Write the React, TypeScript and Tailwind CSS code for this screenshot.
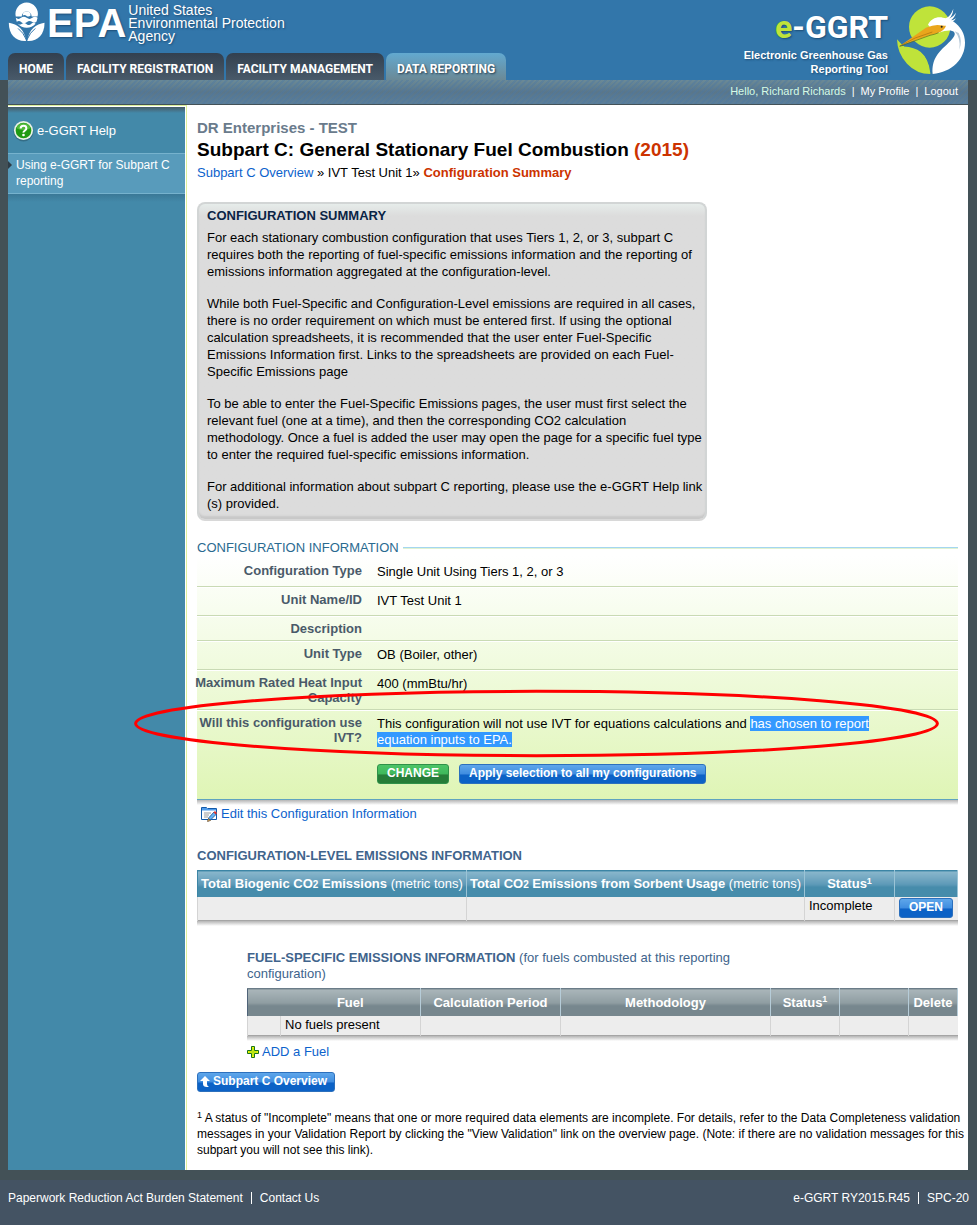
import type { ReactNode } from "react";

const TABS = [
  { label: "HOME", active: false },
  { label: "FACILITY REGISTRATION", active: false },
  { label: "FACILITY MANAGEMENT", active: false },
  { label: "DATA REPORTING", active: true },
];

const SUMMARY = [
  "For each stationary combustion configuration that uses Tiers 1, 2, or 3, subpart C requires both the reporting of fuel-specific emissions information and the reporting of emissions information aggregated at the configuration-level.",
  "While both Fuel-Specific and Configuration-Level emissions are required in all cases, there is no order requirement on which must be entered first. If using the optional calculation spreadsheets, it is recommended that the user enter Fuel-Specific Emissions Information first. Links to the spreadsheets are provided on each Fuel-Specific Emissions page",
  "To be able to enter the Fuel-Specific Emissions pages, the user must first select the relevant fuel (one at a time), and then the corresponding CO2 calculation methodology. Once a fuel is added the user may open the page for a specific fuel type to enter the required fuel-specific emissions information.",
];

export default function App() {
  return (
    <div className="flex min-h-screen flex-col bg-[#435157] font-['Liberation_Sans',Arial,sans-serif] text-[13px] leading-4 text-black">
      <Header />
      <div className="mx-2 mr-[9px] flex flex-1 bg-white">
        <Sidebar />
        <main className="min-w-0 flex-1 pt-[15px] pr-[10px] pb-3 pl-[10px]">
          <p className="text-[15px] leading-4 font-bold text-[#6a7b8c]">DR Enterprises - TEST</p>
          <h1 className="mt-1 text-[19px] leading-5 font-bold">
            Subpart C: General Stationary Fuel Combustion <span className="text-[#cc3300]">(2015)</span>
          </h1>
          <nav aria-label="Breadcrumb" className="mt-[5px]">
            <a href="#overview" className="text-[#0c62cc]">Subpart C Overview</a> » IVT Test Unit 1»{" "}
            <span className="font-bold text-[#cc3300]">Configuration Summary</span>
          </nav>
          <SummaryBox />
          <ConfigurationInfo />
          <a href="#edit" className="mt-px ml-1 flex w-fit items-center gap-1 text-[#0c62cc]">
            <EditIcon />
            Edit this Configuration Information
          </a>
          <EmissionsTable />
          <FuelTable />
          <div className="mt-3">
            <Button color="blue" tight>
              <svg viewBox="0 0 10 11" className="mr-[3px] h-[11px] w-[10px]" aria-hidden="true">
                <path d="M5 0 0 5h3v3q0 3 4 3h2q-2-1-2-3V5h3z" fill="#fff" />
              </svg>
              Subpart C Overview
            </Button>
          </div>
          <p className="mt-[18px] -mr-2 text-xs leading-4">
            <Sup>1</Sup> A status of "Incomplete" means that one or more required data elements are incomplete. For
            details, refer to the Data Completeness validation messages in your Validation Report by clicking the "View
            Validation" link on the overview page. (Note: if there are no validation messages for this subpart you will
            not see this link).
          </p>
        </main>
      </div>
      <footer className="mt-[10px] flex justify-between bg-[#445363] px-2 pt-[10px] pb-[19px] text-xs leading-4 text-white">
        <div className="flex items-center gap-2">
          <a href="#paperwork">Paperwork Reduction Act Burden Statement</a>
          <span className="h-3 w-px bg-white" />
          <a href="#contact">Contact Us</a>
        </div>
        <div className="flex items-center gap-2">
          <span>e-GGRT RY2015.R45</span>
          <span className="h-3 w-px bg-white" />
          <span>SPC-20</span>
        </div>
      </footer>
    </div>
  );
}

function Header() {
  return (
    <header>
      <div className="flex h-20 items-stretch justify-between bg-[#3276aa] pr-[9px] pl-2">
        <div className="flex flex-col justify-between">
          <div className="flex items-start text-white [text-shadow:1px_1px_2px_#1c4c75]">
            <EpaSeal />
            <span className="pl-[1px] text-[40px] leading-[46px] font-bold">EPA</span>
            <span className="pt-1 pl-[2px] text-[14px] leading-[13px]">
              United States
              <br />
              Environmental Protection
              <br />
              Agency
            </span>
          </div>
          <nav aria-label="Main" className="flex gap-[2px]">
            {TABS.map((t) => (
              <a
                key={t.label}
                href="#tab"
                className={`rounded-t-[7px] px-[11px] pt-[6px] pb-px font-[Roboto,'Liberation_Sans',sans-serif] text-[12px] leading-5 font-bold whitespace-nowrap text-white ${
                  t.active
                    ? "bg-linear-to-b from-[#62a9d0] to-[#6a8996] [text-shadow:1px_1px_2px_#243b4d]"
                    : "bg-linear-to-b from-[#32404f] to-[#495a6a]"
                }`}
              >
                {t.label}
              </a>
            ))}
          </nav>
        </div>
        <div className="flex">
          <div className="flex flex-col items-end pr-2 text-white [text-shadow:1px_1px_2px_#1c4c75]">
            <span className="pt-[6px] font-[Roboto,'Liberation_Sans',sans-serif] text-[32px] leading-[42px] font-bold">
              <span className="text-[#bfe33a]">e</span>-GGRT
            </span>
            <span className="text-right text-[11px] leading-[14px] font-bold">
              Electronic Greenhouse Gas
              <br />
              Reporting Tool
            </span>
          </div>
          <HeronLogo />
        </div>
      </div>
      <div className="mx-2 mr-[9px] border-b border-[#435157] bg-linear-to-b from-[#6b8a96] via-[#6386a0]/70 to-[#5c7f99]">
        <div className="flex items-center justify-end gap-[6px] bg-[repeating-linear-gradient(135deg,transparent_0_2px,#4c78a366_2px_4px)] pt-[3px] pr-[10px] pb-[5px] text-[11px] leading-4 text-white">
          <span className="text-[#d5fbe6]">Hello, Richard Richards</span>
          <span>|</span>
          <a href="#profile">My Profile</a>
          <span>|</span>
          <a href="#logout">Logout</a>
        </div>
      </div>
    </header>
  );
}

function Sidebar() {
  return (
    <aside className="flex w-[179px] shrink-0 flex-col border-t border-r border-[#dcf09c] pt-px pr-px">
      <div className="flex-1 bg-[#4389a9] text-white">
        <div className="h-[6px] bg-linear-to-b from-[#445a66] to-[#4389a9]" />
        <a href="#help" className="flex items-center gap-[3px] pt-[7px] pb-[11px] pl-[5px]">
          <svg viewBox="0 0 22 22" className="h-[22px] w-[21px]" aria-hidden="true">
            <circle cx="11" cy="11.5" r="10.5" fill="#2c5a70" opacity=".6" />
            <circle cx="11" cy="10.5" r="10" fill="#e9f3e6" />
            <circle cx="11" cy="10.5" r="8.2" fill="#1f9a12" />
            <path d="M3.5 8a8 8 0 0 1 15 0q-7 4-15 0" fill="#66c74d" opacity=".7" />
            <path d="M8 8.3q0-2.8 3-2.8t3 2.6q0 1.5-1.6 2.4T11 12.7" fill="none" stroke="#fff" strokeWidth="2.1" />
            <circle cx="11" cy="15.2" r="1.4" fill="#fff" />
          </svg>
          e-GGRT Help
        </a>
        <a
          href="#subpart-c"
          className="relative block border-y border-[#76b2cd] bg-[#589bbb] pt-[3px] pb-1 pl-2 text-xs leading-4"
        >
          <span className="absolute top-[7px] left-0 border-y-4 border-l-4 border-y-transparent border-l-[#2d3c47]" />
          Using e-GGRT for Subpart C reporting
        </a>
        <div className="h-2 bg-linear-to-b from-[#3a7896] to-[#4389a9]" />
      </div>
    </aside>
  );
}

function SummaryBox() {
  return (
    <section className="mt-[21px] w-[510px] max-w-full rounded-lg border-2 border-[#d2d5d5] border-b-[#d8d8d8] bg-linear-to-b from-[#e6ecea] to-[#dcdcdc] to-[12px] pt-1 pb-[7px] pl-2 shadow-[inset_0_-4px_2px_-1px_#c8c8c8]">
      <h2 className="font-bold text-[#0a2446]">CONFIGURATION SUMMARY</h2>
      <div className="mt-[5px] flex flex-col gap-[15px] leading-[17px]">
        {SUMMARY.map((text) => (
          <p key={text}>{text}</p>
        ))}
        <p>
          For additional information about subpart C reporting, please use the e-GGRT Help link
          <wbr />
          (s) provided.
        </p>
      </div>
    </section>
  );
}

function ConfigurationInfo() {
  return (
    <section className="mt-[19px]">
      <div className="flex items-center gap-1">
        <h2 className="text-[#2a6a90]">CONFIGURATION INFORMATION</h2>
        <span className="flex-1">
          <span className="block h-px bg-[#a4d6f0]" />
          <span className="block h-px bg-[#def2d2]" />
        </span>
      </div>
      <dl className="border-b border-[#5fa3bf] bg-linear-to-b from-white to-[#dff5b5] pt-[2px]">
        <Row label="Configuration Type">Single Unit Using Tiers 1, 2, or 3</Row>
        <Row label="Unit Name/ID">IVT Test Unit 1</Row>
        <Row label="Description" />
        <Row label="Unit Type">OB (Boiler, other)</Row>
        <Row label="Maximum Rated Heat Input Capacity">400 (mmBtu/hr)</Row>
        <div className="relative flex gap-[15px] pb-[15px]">
          <Label>Will this configuration use IVT?</Label>
          <dd className="min-w-0 flex-1 pt-[6px]">
            <p className="max-w-[500px]">
              This configuration will not use IVT for equations calculations and{" "}
              <mark className="bg-[#3399ff] text-white">has chosen to report equation inputs to EPA.</mark>
            </p>
            <div className="mt-4 flex flex-wrap gap-[10px]">
              <Button color="green">CHANGE</Button>
              <Button color="blue">Apply selection to all my configurations</Button>
            </div>
          </dd>
          <div className="pointer-events-none absolute -top-5 right-[19px] -left-[63px] h-[67px]">
            <svg className="h-full w-full overflow-visible" aria-hidden="true">
              <ellipse cx="50%" cy="50%" rx="49.8%" ry="48%" fill="none" stroke="#ff0000" strokeWidth="3" />
            </svg>
          </div>
        </div>
      </dl>
      <Shadow />
    </section>
  );
}

function Label({ children }: { children: ReactNode }) {
  return (
    <dt className="-ml-[2px] w-[167px] shrink-0 pt-[5px] pb-1 text-right leading-[15px] font-bold text-[#4a5a69]">
      {children}
    </dt>
  );
}

function Row({ label, children }: { label: string; children?: ReactNode }) {
  return (
    <div className="flex gap-[15px] border-b border-[#c9dab4] shadow-[0_1px_0_#ffffff]">
      <Label>{label}</Label>
      {children && <dd className="py-[6px]">{children}</dd>}
    </div>
  );
}

function EmissionsTable() {
  const th =
    "border-t border-r border-l border-t-[#3c85a5] border-r-[#9bc4d6] border-l-[#3c85a5] bg-linear-to-b from-[#8ab7cc] via-[#5e9ab8] via-50% to-[#468cab] to-60% pt-px font-bold text-white";
  return (
    <section className="mt-[26px]">
      <h2 className="font-bold text-[#40648c]">CONFIGURATION-LEVEL EMISSIONS INFORMATION</h2>
      <table className="mt-[6px] w-full table-fixed border-b border-[#a5a5a5] bg-[#ededed]">
        <colgroup>
          <col className="w-[269px]" />
          <col />
          <col className="w-[90px]" />
          <col className="w-[63px]" />
        </colgroup>
        <thead>
          <tr className="h-[26px] whitespace-nowrap">
            <th className={th}>
              Total Biogenic CO<span className="text-[10px]">2</span> Emissions{" "}
              <span className="font-normal">(metric tons)</span>
            </th>
            <th className={th}>
              Total CO<span className="text-[10px]">2</span> Emissions from Sorbent Usage{" "}
              <span className="font-normal">(metric tons)</span>
            </th>
            <th className={th}>
              Status<Sup>1</Sup>
            </th>
            <th className={th} aria-label="Actions" />
          </tr>
        </thead>
        <tbody>
          <tr className="h-6 align-top">
            <td className="border-l border-[#d4d4d4]" />
            <td className="border-l border-[#d4d4d4]" />
            <td className="border-l border-[#d4d4d4] pt-px pl-1">Incomplete</td>
            <td className="border-l border-[#d4d4d4] pt-px pl-1">
              <Button color="blue">OPEN</Button>
            </td>
          </tr>
        </tbody>
      </table>
      <Shadow />
    </section>
  );
}

function FuelTable() {
  const base =
    "border-t border-t-[#6b7c88] bg-linear-to-b from-[#aab6ba] via-[#8f9da2] via-50% to-[#77878e] to-60% pt-px font-bold text-white";
  const first = `${base} border-l border-l-[#4f6378]`;
  const th = `${first} border-r border-r-[#b6ccd8]`;
  const td = "border-l border-[#d4d4d4]";
  return (
    <section className="mt-6 ml-[50px]">
      <h2 className="max-w-[500px] text-[#40648c]">
        <b>FUEL-SPECIFIC EMISSIONS INFORMATION</b> (for fuels combusted at this reporting configuration)
      </h2>
      <table className="mt-[6px] w-full table-fixed border-b border-[#a5a5a5] bg-[#ededed]">
        <colgroup>
          <col className="w-[33px]" />
          <col className="w-[140px]" />
          <col className="w-[140px]" />
          <col />
          <col className="w-[69px]" />
          <col className="w-[69px]" />
          <col className="w-[49px]" />
        </colgroup>
        <thead>
          <tr className="h-[27px]">
            <th className={first} aria-label="Row" />
            <th className={`${base} border-r border-r-[#b6ccd8]`}>Fuel</th>
            <th className={th}>Calculation Period</th>
            <th className={th}>Methodology</th>
            <th className={th}>
              Status<Sup>1</Sup>
            </th>
            <th className={th} aria-label="Actions" />
            <th className={th}>Delete</th>
          </tr>
        </thead>
        <tbody>
          <tr className="h-5">
            <td className={td} />
            <td className={`${td} pl-1`}>No fuels present</td>
            <td className={td} />
            <td className={td} />
            <td className={td} />
            <td className={td} />
            <td className={td} />
          </tr>
        </tbody>
      </table>
      <Shadow />
      <a href="#add-fuel" className="mt-[3px] flex w-fit items-center gap-[3px] text-[#0c62cc]">
        <svg viewBox="0 0 12 12" className="h-3 w-3" aria-hidden="true">
          <path d="M4.500.5h3v4h4v3h-4v4h-3v-4h-4v-3h4z" fill="#f4f400" stroke="#16751a" />
          <path d="M6 2v8M2 6h8" stroke="#9be020" />
        </svg>
        ADD a Fuel
      </a>
    </section>
  );
}

function Button({ color, tight, children }: { color: "blue" | "green"; tight?: boolean; children: ReactNode }) {
  return (
    <button
      type="button"
      className={`flex h-5 items-center rounded-[3px] border pb-[2px] text-xs leading-4 font-bold whitespace-nowrap text-white ${
        tight ? "pr-[7px] pl-[2px]" : "px-[9px]"
      } ${
        color === "green"
          ? "border-[#2f9149] bg-linear-to-b from-[#4cc467] via-[#3fb85b] via-50% to-[#267d38] to-55%"
          : "border-[#2c70bd] bg-linear-to-b from-[#5ea6ea] via-[#3f8de0] via-50% to-[#0c62c6] to-55%"
      }`}
    >
      {children}
    </button>
  );
}

function Sup({ children }: { children: ReactNode }) {
  return <sup className="text-[9px] leading-none">{children}</sup>;
}

function Shadow() {
  return <div className="h-[5px] bg-linear-to-b from-[#b5b5b5] to-white" />;
}

function EditIcon() {
  return (
    <svg viewBox="0 0 16 16" className="h-4 w-4" aria-hidden="true">
      <path d="M.5 13.5V1.5h5l1 1h9v11z" fill="#fff" stroke="#1259a8" />
      <path d="M1 2h5l1 1h8v1.500H1z" fill="#4e9bea" />
      <path d="M3 7h7M3 9h5M3 11h4" stroke="#9a9a9a" />
      <path d="M7 15l1-3.500 5-5.500 2.500 2-5.500 5.500z" fill="#62b3f5" stroke="#1e4e8c" strokeWidth=".8" />
      <path d="M12.500 6.500 14 5l2 2-1.300 1.500z" fill="#e2372b" />
      <path d="M6.500 15.500l1-3 2 2z" fill="#f0c070" stroke="#5b3b16" strokeWidth=".6" />
    </svg>
  );
}

function EpaSeal() {
  return (
    <svg viewBox="24 0 114 130" className="h-[43px] w-[38px]" role="img" aria-label="EPA seal">
      <g fill="#fff">
        <path d="M47 50a34 34 0 1 1 66 0H95a15 15 0 1 0-30 0z" />
        <path d="M68 47a12 12 0 0 1 24 0q-6 5-12 1t-12-1z" />
        <path d="M47 54q8 7 16 0t17 0 17 0 16 0l-3 11q-7 7-14 1t-16 1-16 0-14-1z" />
        <path d="M53 72q7 5 13 0t14 1 14-1 13 0Q96 84 80 84T53 72z" />
        <path d="M26 69c26 4 48 20 52 55-30 2-52-18-52-55z" />
        <path d="M134 69c-26 4-48 20-52 55 30 2 52-18 52-55z" />
      </g>
      <path d="M54 86q16 12 25 34M106 86q-16 12-25 34" fill="none" stroke="#3276aa" strokeWidth="3" />
    </svg>
  );
}

function HeronLogo() {
  return (
    <svg viewBox="536 0 216 240" className="h-20 w-[72px]" role="img" aria-label="Heron">
      <circle cx="637" cy="81" r="62" fill="#bfe33a" />
      <path d="M539 118q7 8 16 17l-8 4q38-7 60 12 34 30 32 71-41 0-70-31-29-30-30-73z" fill="#bfe33a" />
      <path d="M560 137q32 2 52 17 24 20 29 62 5-28 20-48" fill="none" stroke="#3276aa" strokeWidth="5" />
      <path
        d="M632 74c8-17 26-25 45-21 13 1 22 5 30 11 23 15 36 38 36 64 0 48-38 88-97 94-4-46 20-68 42-88 16-15 30-29 22-38-8-8-24-5-46 2-14-6-24-14-32-24z"
        fill="#fff"
      />
      <path d="M685 55q15-6 23-29-1 18-12 30 14-8 20-18-4 16-17 24 10-2 17-7-8 13-24 14z" fill="#fff" />
      <path d="M712 94q19 20 14 55 10-27-2-50z" fill="#b6c9d8" />
      <path d="M547 138 626 83q26-10 42-7 12 2 18 1-4 15-28 23-9 3-20 5z" fill="#eaa61c" />
      <path d="M547 138q44-27 98-42" fill="none" stroke="#a8700f" strokeWidth="2" />
      <path d="M547 139 638 106q16-3 26-8" fill="none" stroke="#5b6a1c" strokeWidth="2" />
      <circle cx="673" cy="80" r="3" fill="#222" />
    </svg>
  );
}
